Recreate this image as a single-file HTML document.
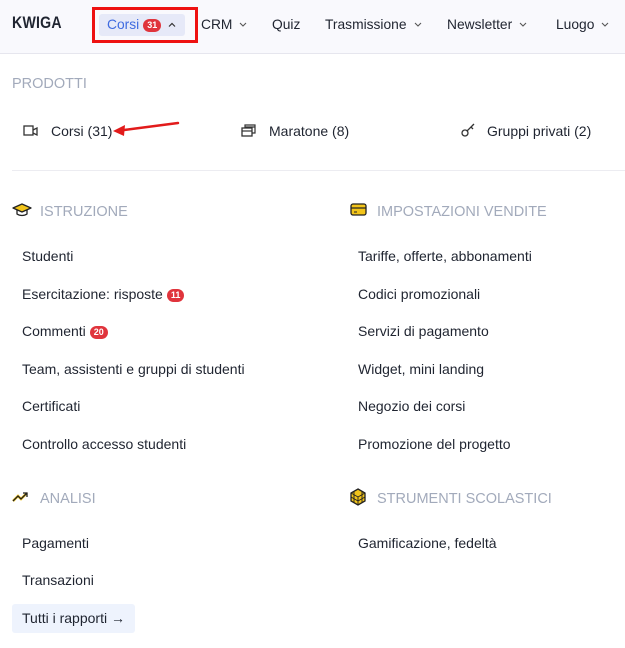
<!DOCTYPE html>
<html><head><meta charset="utf-8"><style>
*{margin:0;padding:0;box-sizing:border-box}
body{width:625px;height:648px;background:#fff;font-family:"Liberation Sans",sans-serif;color:#1f2430;font-size:14px;position:relative;overflow:hidden}
.a{position:absolute;white-space:nowrap;line-height:16px}
.hdr{position:absolute;left:0;top:0;width:625px;height:54px;background:#f9f9fd;border-bottom:1px solid #e6e6ee}
.h{font-size:14.5px;color:#a2aabb;line-height:18px}
.badge{display:inline-block;background:#e0343c;color:#fff;font-size:9px;font-weight:bold;border-radius:7px;padding:0 4px;line-height:13px;vertical-align:1px;margin-left:4px}
.n{font-size:13.8px}
.chev{display:inline-block;width:8px;height:5px;margin-left:7px;vertical-align:2px}
</style></head><body>
<div class="hdr"></div>
<div class="a" style="left:12px;top:15px;font-size:17px;font-weight:bold;letter-spacing:0.3px;transform:scaleX(0.83);transform-origin:left">KWIGA</div>
<div style="position:absolute;left:99px;top:14px;width:86px;height:22px;background:#e6e9f8;border-radius:3px"></div>
<div style="position:absolute;left:92px;top:7px;width:106px;height:36px;border:3px solid #ee1111"></div>
<div class="a n" style="left:107px;top:17px;color:#3f6be0">Corsi<span class="badge">31</span><svg class="chev" viewBox="0 0 8 5"><path d="M1 4.5L4 1.5 7 4.5" fill="none" stroke="#333" stroke-width="1.2"/></svg></div>
<div class="a n" style="left:201px;top:17px">CRM<svg class="chev" viewBox="0 0 8 5"><path d="M1 1L4 4 7 1" fill="none" stroke="#555" stroke-width="1.1"/></svg></div>
<div class="a n" style="left:272px;top:17px">Quiz</div>
<div class="a n" style="left:325px;top:17px">Trasmissione<svg class="chev" viewBox="0 0 8 5"><path d="M1 1L4 4 7 1" fill="none" stroke="#555" stroke-width="1.1"/></svg></div>
<div class="a n" style="left:447px;top:17px">Newsletter<svg class="chev" viewBox="0 0 8 5"><path d="M1 1L4 4 7 1" fill="none" stroke="#555" stroke-width="1.1"/></svg></div>
<div class="a n" style="left:556px;top:17px">Luogo<svg class="chev" viewBox="0 0 8 5"><path d="M1 1L4 4 7 1" fill="none" stroke="#555" stroke-width="1.1"/></svg></div>

<div class="a h" style="left:12px;top:75px">PRODOTTI</div>
<svg class="a" style="left:23px;top:124px" width="16" height="14" viewBox="0 0 16 14"><rect x="1" y="2" width="9" height="9" fill="none" stroke="#333" stroke-width="1.3"/><path d="M10 6l4-2v7l-4-2" fill="none" stroke="#333" stroke-width="1.3"/></svg>
<div class="a" style="left:51px;top:123px">Corsi (31)</div>
<svg class="a" style="left:110px;top:120px" width="70" height="16"><line x1="68" y1="3" x2="14" y2="10" stroke="#e21b1b" stroke-width="2.5" stroke-linecap="round"/><path d="M3 11l12-6-1 11z" fill="#e21b1b"/></svg>
<svg class="a" style="left:241px;top:122px" width="16" height="16" viewBox="0 0 16 16"><rect x="1" y="6" width="10" height="8" fill="none" stroke="#333" stroke-width="1.3"/><line x1="1" y1="9" x2="11" y2="9" stroke="#333" stroke-width="1.2"/><path d="M4 6V3h10v8h-3M4 5h10" fill="none" stroke="#333" stroke-width="1.2"/></svg>
<div class="a" style="left:269px;top:123px">Maratone (8)</div>
<svg class="a" style="left:460px;top:122px" width="16" height="16" viewBox="0 0 16 16"><circle cx="5" cy="11" r="3" fill="none" stroke="#333" stroke-width="1.3"/><path d="M7 9l7-7M11 5l2 2M12 3l1 1" stroke="#333" stroke-width="1.3" fill="none"/></svg>
<div class="a" style="left:487px;top:123px">Gruppi privati (2)</div>
<div style="position:absolute;left:12px;top:170px;width:613px;height:1px;background:#ececf1"></div>

<svg class="a" style="left:12px;top:202px" width="20" height="16" viewBox="0 0 20 16"><path d="M1 6l9-4 9 4-9 4z" fill="#f2c41a" stroke="#222" stroke-width="1.3" stroke-linejoin="round"/><path d="M5 8v4c3 2 7 2 10 0V8" fill="none" stroke="#222" stroke-width="1.3"/></svg>
<div class="a h" style="left:40px;top:203px">ISTRUZIONE</div>
<svg class="a" style="left:350px;top:203px" width="18" height="14" viewBox="0 0 18 14"><rect x="1" y="1" width="15" height="11" rx="2" fill="#f2c41a" stroke="#222" stroke-width="1.3"/><line x1="1" y1="5" x2="16" y2="5" stroke="#222" stroke-width="1.2"/><line x1="4" y1="9" x2="7" y2="9" stroke="#222" stroke-width="1"/></svg>
<div class="a h" style="left:377px;top:203px">IMPOSTAZIONI VENDITE</div>

<div class="a" style="left:22px;top:248px">Studenti</div>
<div class="a" style="left:22px;top:286px">Esercitazione: risposte<span class="badge">11</span></div>
<div class="a" style="left:22px;top:323px">Commenti<span class="badge">20</span></div>
<div class="a" style="left:22px;top:361px">Team, assistenti e gruppi di studenti</div>
<div class="a" style="left:22px;top:398px">Certificati</div>
<div class="a" style="left:22px;top:436px">Controllo accesso studenti</div>
<div class="a" style="left:358px;top:248px">Tariffe, offerte, abbonamenti</div>
<div class="a" style="left:358px;top:286px">Codici promozionali</div>
<div class="a" style="left:358px;top:323px">Servizi di pagamento</div>
<div class="a" style="left:358px;top:361px">Widget, mini landing</div>
<div class="a" style="left:358px;top:398px">Negozio dei corsi</div>
<div class="a" style="left:358px;top:436px">Promozione del progetto</div>

<svg class="a" style="left:12px;top:490px" width="18" height="14" viewBox="0 0 18 14"><path d="M1 11l5-5 3 3 6-6" fill="none" stroke="#f2c41a" stroke-width="2.5"/><path d="M1 11l5-5 3 3 6-6M11 3h4v4" fill="none" stroke="#222" stroke-width="1.3"/></svg>
<div class="a h" style="left:40px;top:490px">ANALISI</div>
<svg class="a" style="left:350px;top:488px" width="16" height="18" viewBox="0 0 16 18"><path d="M8 1l7 4v8l-7 4-7-4V5z" fill="#f2c41a" stroke="#222" stroke-width="1.3"/><path d="M1 5l7 4 7-4M8 9v8M4 3v12M12 3v12M1 9l7 4 7-4" fill="none" stroke="#222" stroke-width="0.9"/></svg>
<div class="a h" style="left:377px;top:490px">STRUMENTI SCOLASTICI</div>

<div class="a" style="left:22px;top:535px">Pagamenti</div>
<div class="a" style="left:22px;top:572px">Transazioni</div>
<div style="position:absolute;left:12px;top:604px;width:123px;height:29px;background:#eef3fd;border-radius:3px"></div>
<div class="a" style="left:22px;top:610px">Tutti i rapporti &#8594;</div>
<div class="a" style="left:358px;top:535px">Gamificazione, fedeltà</div>
</body></html>
